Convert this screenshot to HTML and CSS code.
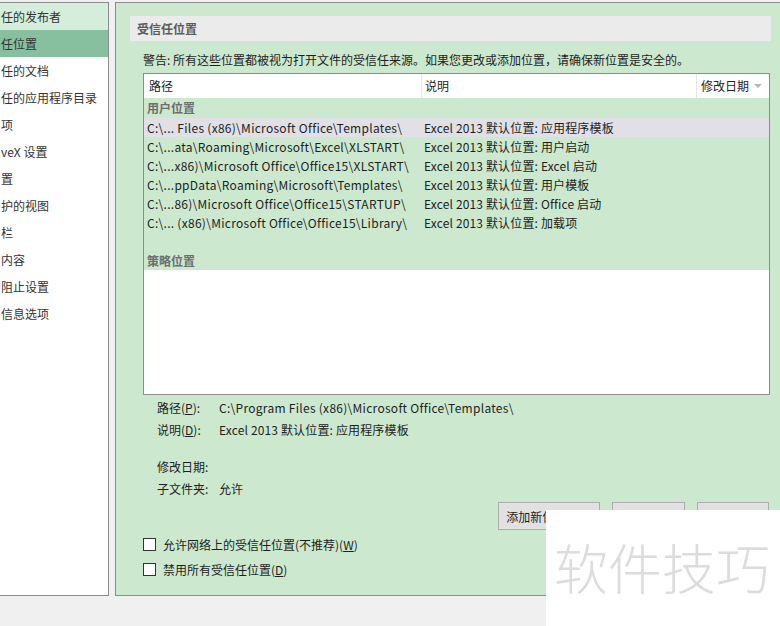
FILE: index.html
```html
<!DOCTYPE html>
<html lang="zh-CN">
<head>
<meta charset="utf-8">
<title>受信任位置</title>
<link rel="stylesheet" href="styles.css">
</head>
<body>
<div class="app">
  <nav class="sidebar">
    <div class="nav-item hover">任的发布者</div>
    <div class="nav-item active">任位置</div>
    <div class="nav-item">任的文档</div>
    <div class="nav-item">任的应用程序目录</div>
    <div class="nav-item">项</div>
    <div class="nav-item">veX 设置</div>
    <div class="nav-item">置</div>
    <div class="nav-item">护的视图</div>
    <div class="nav-item">栏</div>
    <div class="nav-item">内容</div>
    <div class="nav-item">阻止设置</div>
    <div class="nav-item">信息选项</div>
  </nav>
  <main class="panel">
    <div class="heading">受信任位置</div>
    <div class="warning">警告: 所有这些位置都被视为打开文件的受信任来源。如果您更改或添加位置，请确保新位置是安全的。</div>
    <div class="table">
      <div class="thead">
        <div class="th c1">路径</div>
        <div class="th c2">说明</div>
        <div class="th c3">修改日期<span class="sort"></span></div>
      </div>
      <div class="tbody">
        <div class="group first">用户位置</div>
        <div class="row selected"><div class="td c1">C:\... Files (x86)\Microsoft Office\Templates\</div><div class="td c2">Excel 2013 默认位置: 应用程序模板</div></div>
        <div class="row"><div class="td c1">C:\...ata\Roaming\Microsoft\Excel\XLSTART\</div><div class="td c2">Excel 2013 默认位置: 用户启动</div></div>
        <div class="row"><div class="td c1">C:\...x86)\Microsoft Office\Office15\XLSTART\</div><div class="td c2">Excel 2013 默认位置: Excel 启动</div></div>
        <div class="row"><div class="td c1">C:\...ppData\Roaming\Microsoft\Templates\</div><div class="td c2">Excel 2013 默认位置: 用户模板</div></div>
        <div class="row"><div class="td c1">C:\...86)\Microsoft Office\Office15\STARTUP\</div><div class="td c2">Excel 2013 默认位置: Office 启动</div></div>
        <div class="row"><div class="td c1">C:\... (x86)\Microsoft Office\Office15\Library\</div><div class="td c2">Excel 2013 默认位置: 加载项</div></div>
        <div class="row"></div>
        <div class="group">策略位置</div>
      </div>
    </div>
    <div class="details">
      <div class="drow"><span class="dlabel">路径(<u>P</u>):</span><span class="dpath">C:\Program Files (x86)\Microsoft Office\Templates\</span></div>
      <div class="drow"><span class="dlabel">说明(<u>D</u>):</span><span class="ddesc">Excel 2013 默认位置: 应用程序模板</span></div>
      <div class="drow gap"><span class="dlabel">修改日期:</span><span></span></div>
      <div class="drow"><span class="dlabel">子文件夹:</span><span>允许</span></div>
    </div>
    <div class="buttons">
      <button class="btn b1">添加新位置(<u>A</u>)...</button>
      <button class="btn b2">删除(<u>R</u>)</button>
      <button class="btn b3">修改(<u>M</u>)...</button>
    </div>
    <label class="check"><span class="box"></span>允许网络上的受信任位置(不推荐)(<u>W</u>)</label>
    <label class="check"><span class="box"></span>禁用所有受信任位置(<u>D</u>)</label>
  </main>
</div>
<div class="watermark">软件技巧</div>
</body>
</html>
```

FILE: styles.css
```css
* { box-sizing: border-box; }
html, body { margin: 0; padding: 0; }
body {
  width: 780px;
  height: 626px;
  overflow: hidden;
  background: #f0f0f0;
  font-family: "Noto Sans CJK SC", "Noto Sans", sans-serif;
  font-size: 12px;
  color: #1e1e1e;
  position: relative;
}
.app {
  display: flex;
  align-items: flex-start;
  padding-top: 2px;
}
.sidebar {
  width: 109px;
  height: 594px;
  background: #fff;
  border: 1px solid #8c8c8c;
  border-left: none;
  display: flex;
  flex-direction: column;
}
.nav-item {
  height: 27px;
  line-height: 27px;
  padding-left: 1px;
  color: #333;
  white-space: nowrap;
  overflow: hidden;
}
.nav-item.hover { background: #d4eedb; }
.nav-item.active { background: #86c09f; }
.panel {
  margin-left: 6px;
  width: 665px;
  height: 594px;
  background: #cce8cf;
  border: 1px solid #8c8c8c;
  border-right: none;
  padding: 13px 9px 0 14px;
  display: flex;
  flex-direction: column;
}
.heading {
  height: 25px;
  line-height: 25px;
  background: #ebebeb;
  padding-left: 7px;
  font-weight: bold;
  color: #5c5c5c;
}
.warning {
  margin: 10px 0 4px 13px;
  height: 18px;
  line-height: 18px;
  white-space: nowrap;
}
.table {
  margin-left: 13px;
  width: 627px;
  height: 322px;
  background: #fff;
  border: 1px solid #8c8c8c;
  display: flex;
  flex-direction: column;
}
.thead {
  display: flex;
  height: 24px;
  line-height: 24px;
}
.th { padding-left: 5px; position: relative; }
.th.c1 { width: 278px; border-right: 1px solid #e5e5e5; }
.th.c2 { width: 275px; border-right: 1px solid #e5e5e5; padding-left: 3px; }
.th.c3 { flex: 1; padding-left: 4px; }
.sort {
  position: absolute;
  right: 7px;
  top: 10px;
  width: 0;
  height: 0;
  border-left: 4px solid transparent;
  border-right: 4px solid transparent;
  border-top: 4px solid #b5b5b5;
}
.tbody { background: #cce8cf; }
.group {
  height: 19px;
  line-height: 19px;
  padding-left: 3px;
  font-weight: bold;
  color: #6e6e6e;
}
.group.first { height: 20px; line-height: 20px; }
.row {
  display: flex;
  height: 19px;
  line-height: 19px;
  white-space: nowrap;
}
.row.selected { background: #e0e0e6; }
.td.c1 { width: 278px; padding-left: 3px; overflow: hidden; letter-spacing: 0.28px; }
.td.c2 { padding-left: 2px; letter-spacing: 0.15px; }
.dpath { letter-spacing: 0.28px; }
.ddesc { letter-spacing: 0.15px; }
.details {
  margin-top: 2px;
  display: flex;
  flex-direction: column;
}
.drow {
  height: 22px;
  line-height: 22px;
  padding-left: 27px;
  display: flex;
  white-space: nowrap;
}
.drow.gap { margin-top: 15px; }
.dlabel { width: 62px; }
.buttons {
  margin-top: 2px;
  display: flex;
  justify-content: flex-end;
  padding-right: 2px;
}
.btn {
  height: 28px;
  background: #e1e1e1;
  border: 1px solid #adadad;
  font: inherit;
  color: #1e1e1e;
  padding: 0;
}
.btn u { text-decoration: underline; }
.b1 { width: 102px; }
.b2 { width: 73px; margin-left: 12px; }
.b3 { width: 72px; margin-left: 12px; }
.check {
  margin-left: 13px;
  height: 25px;
  line-height: 25px;
  display: flex;
  align-items: center;
  white-space: nowrap;
}
.buttons + .check { margin-top: 2px; }
.box {
  width: 13px;
  height: 13px;
  border: 1px solid #333;
  background: #fff;
  margin-right: 7px;
  flex: none;
}
.watermark {
  position: absolute;
  left: 546px;
  top: 510px;
  width: 234px;
  height: 116px;
  background: #fff;
  color: #dcdcdc;
  font-size: 54px;
  font-weight: 300;
  line-height: 60px;
  padding: 27px 0 0 8px;
  white-space: nowrap;
  overflow: hidden;
}
```
